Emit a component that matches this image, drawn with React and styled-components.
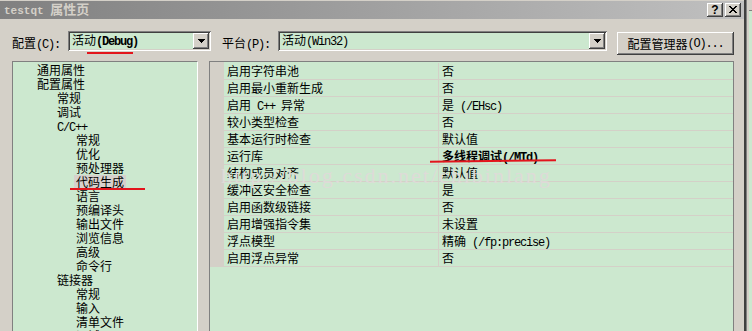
import React from "react";
import styled, { createGlobalStyle } from "styled-components";

const GREEN = "#cce8cf";
const FACE = "#d4d0c8";

const GlobalStyle = createGlobalStyle`
  html, body { margin: 0; padding: 0; width: 752px; height: 331px; overflow: hidden; background: ${FACE}; }
  body { font-family: "Noto Sans CJK SC", "Liberation Sans", sans-serif; font-size: 12px; color: #000; }
  #root { width: 752px; height: 331px; }
`;

const Latin = styled.span`
  font-family: "Liberation Mono", monospace;
  font-size: 12px;
  letter-spacing: -1.2px;
  font-weight: ${(p) => (p.$bold ? 700 : "inherit")};
`;

function Mixed({ text, boldLatin }) {
  const parts = text.split(/([\x20-\x7E]+)/).filter(Boolean);
  return parts.map((p, i) =>
    /^[\x20-\x7E]+$/.test(p) ? (
      <Latin key={i} $bold={boldLatin}>{p}</Latin>
    ) : (
      <React.Fragment key={i}>{p}</React.Fragment>
    )
  );
}

const Screen = styled.div`
  display: flex;
  width: 752px;
  height: 331px;
  overflow: hidden;
`;

const Dialog = styled.div`
  flex: none;
  width: 746px;
  height: 331px;
  display: flex;
  flex-direction: column;
  background: ${FACE};
  border-right: 2px solid #404040;
  padding-top: 1px;
  box-sizing: border-box;
`;

const BehindStrip = styled.div`
  flex: 1;
  background: ${FACE};
  display: flex;
  flex-direction: column;
  padding-top: 10px;
  border-left: 1px solid #808080;
`;

const BehindGreen = styled.div`
  flex: 1;
  margin-left: 2px;
  background: ${GREEN};
  border-top: 1px solid #808080;
`;

const TitleBar = styled.div`
  height: 18px;
  flex: none;
  display: flex;
  align-items: center;
  padding: 0 3px 0 4px;
  background: linear-gradient(to right, #808080, #c0c0c0);
`;

const TitleText = styled.span`
  color: ${FACE};
  font-weight: 700;
  font-size: 13px;
  line-height: 18px;
`;

const TitleMono = styled.span`
  font-family: "Liberation Mono", monospace;
  font-size: 11px;
  font-weight: 700;
`;

const CaptionButtons = styled.div`
  margin-left: auto;
  display: flex;
  gap: 2px;
`;

const raised = `
  box-shadow: inset -1px -1px #404040, inset 1px 1px #ffffff, inset -2px -2px #808080, inset 2px 2px ${FACE};
`;
const sunken = `
  box-shadow: inset 1px 1px #808080, inset -1px -1px #ffffff, inset 2px 2px #404040, inset -2px -2px ${FACE};
`;

const CaptionButton = styled.div`
  width: 16px;
  height: 14px;
  box-sizing: border-box;
  background: ${FACE};
  ${raised}
  display: flex;
  align-items: center;
  justify-content: center;
  font-family: "Liberation Sans", sans-serif;
  font-weight: 700;
  font-size: 12px;
  line-height: 14px;
  color: #000;
  padding-bottom: 1px;
`;

const Toolbar = styled.div`
  flex: none;
  height: 42px;
  box-sizing: border-box;
  display: flex;
  align-items: flex-start;
  padding: 12px 10px 0 12px;
`;

const FieldLabel = styled.div`
  flex: none;
  width: ${(p) => p.$w}px;
  margin-left: ${(p) => p.$ml || 0}px;
  height: 20px;
  line-height: 20px;
  padding-top: 2px;
  box-sizing: border-box;
  white-space: nowrap;
`;

const Combo = styled.div`
  position: relative;
  flex: none;
  width: ${(p) => p.$w}px;
  height: 20px;
  box-sizing: border-box;
  background: ${GREEN};
  ${sunken}
  display: flex;
  align-items: center;
  padding: 2px 2px 2px 4px;
`;

const ComboText = styled.div`
  flex: 1;
  line-height: 16px;
  white-space: nowrap;
`;

const ComboArrow = styled.div`
  flex: none;
  width: 16px;
  height: 16px;
  box-sizing: border-box;
  background: ${FACE};
  ${raised}
  display: flex;
  align-items: center;
  justify-content: center;
`;

const Mark = styled.span`
  position: absolute;
  left: ${(p) => p.$left}px;
  top: ${(p) => p.$top}px;
  width: ${(p) => p.$width}px;
  height: 2px;
  background: #e3141c;
  transform: rotate(${(p) => p.$rot || 0}deg);
  pointer-events: none;
`;

const PushButton = styled.div`
  flex: none;
  margin-left: 10px;
  margin-top: 1px;
  width: 117px;
  height: 23px;
  box-sizing: border-box;
  background: ${FACE};
  ${raised}
  display: flex;
  align-items: center;
  justify-content: center;
  line-height: 20px;
  padding-top: 1px;
  white-space: nowrap;
`;

const Content = styled.div`
  flex: 1;
  min-height: 0;
  display: flex;
  gap: 11px;
  padding: 0 10px 0 12px;
`;

const TreePanel = styled.div`
  flex: none;
  width: 186px;
  box-sizing: border-box;
  border-top: 1px solid #808080;
  border-left: 1px solid #808080;
  border-right: 1px solid #ffffff;
  background: ${GREEN};
  padding-top: 1px;
  overflow: hidden;
`;

const TreeItem = styled.div`
  height: 14px;
  line-height: 14px;
  padding-left: ${(p) => [24, 44, 63][p.$level]}px;
  white-space: nowrap;
`;

const TreeLabel = styled.span`
  position: relative;
  display: inline-block;
  height: 14px;
  padding: 0 2px;
  margin-left: -2px;
  background: ${(p) => (p.$selected ? "#d6d0cc" : "transparent")};
`;

const GridPanel = styled.div`
  position: relative;
  flex: 1;
  box-sizing: border-box;
  border-top: 1px solid #808080;
  border-left: 1px solid #808080;
  border-right: 1px solid #808080;
  background: ${GREEN};
  overflow: hidden;
`;

const Rows = styled.div`
  padding-top: 1px;
  background: linear-gradient(to right, ${FACE} 14px, transparent 14px);
`;

const Row = styled.div`
  display: grid;
  grid-template-columns: 14px 215px 1fr;
  height: 17px;
  box-sizing: border-box;
  border-bottom: 1px solid ${FACE};
`;

const NameCell = styled.div`
  grid-column: 2;
  padding-left: 3px;
  line-height: 16px;
  border-right: 1px solid ${FACE};
  white-space: nowrap;
`;

const ValueCell = styled.div`
  position: relative;
  padding-left: 3px;
  line-height: 16px;
  white-space: nowrap;
  font-weight: ${(p) => (p.$bold ? 700 : 400)};
`;

const Watermark = styled.div`
  position: absolute;
  left: 11px;
  top: 103px;
  font-family: "Liberation Serif", serif;
  font-size: 22px;
  line-height: 22px;
  letter-spacing: 2px;
  color: #dedbd8;
  white-space: nowrap;
  pointer-events: none;
`;

const tree = [
  [0, "通用属性"],
  [0, "配置属性"],
  [1, "常规"],
  [1, "调试"],
  [1, "C/C++"],
  [2, "常规"],
  [2, "优化"],
  [2, "预处理器"],
  [2, "代码生成", true],
  [2, "语言"],
  [2, "预编译头"],
  [2, "输出文件"],
  [2, "浏览信息"],
  [2, "高级"],
  [2, "命令行"],
  [1, "链接器"],
  [2, "常规"],
  [2, "输入"],
  [2, "清单文件"],
  [2, "调试"],
];

const props = [
  ["启用字符串池", "否"],
  ["启用最小重新生成", "否"],
  ["启用 C++ 异常", "是 (/EHsc)"],
  ["较小类型检查", "否"],
  ["基本运行时检查", "默认值"],
  ["运行库", "多线程调试(/MTd)", true],
  ["结构成员对齐", "默认值"],
  ["缓冲区安全检查", "是"],
  ["启用函数级链接", "否"],
  ["启用增强指令集", "未设置"],
  ["浮点模型", "精确 (/fp:precise)"],
  ["启用浮点异常", "否"],
];

const DownArrow = () => (
  <svg width="7" height="4" viewBox="0 0 7 4" shapeRendering="crispEdges">
    <polygon points="0,0 7,0 3.5,4" fill="#000" />
  </svg>
);

const CloseGlyph = () => (
  <svg width="8" height="7" viewBox="0 0 8 7" shapeRendering="crispEdges">
    <path d="M0 0h2v1h-2zM6 0h2v1h-2zM1 1h2v1h-2zM5 1h2v1h-2zM2 2h4v1h-4zM3 3h2v1h-2zM2 4h4v1h-4zM1 5h2v1h-2zM5 5h2v1h-2zM0 6h2v1h-2zM6 6h2v1h-2z" fill="#000" />
  </svg>
);

export default function App() {
  return (
    <>
      <GlobalStyle />
      <Screen>
        <Dialog>
          <TitleBar>
            <TitleText>
              <TitleMono>testqt </TitleMono>属性页
            </TitleText>
            <CaptionButtons>
              <CaptionButton>?</CaptionButton>
              <CaptionButton>
                <CloseGlyph />
              </CaptionButton>
            </CaptionButtons>
          </TitleBar>

          <Toolbar>
            <FieldLabel $w={56}>
              <Mixed text="配置(C):" />
            </FieldLabel>
            <Combo $w={143}>
              <ComboText>
                <Mixed text="活动(Debug)" boldLatin />
              </ComboText>
              <ComboArrow>
                <DownArrow />
              </ComboArrow>
              <Mark $left={19} $top={21} $width={46} />
            </Combo>
            <FieldLabel $w={56} $ml={11}>
              <Mixed text="平台(P):" />
            </FieldLabel>
            <Combo $w={329}>
              <ComboText>
                <Mixed text="活动(Win32)" />
              </ComboText>
              <ComboArrow>
                <DownArrow />
              </ComboArrow>
            </Combo>
            <PushButton>
              <Mixed text="配置管理器(O)..." />
            </PushButton>
          </Toolbar>

          <Content>
            <TreePanel>
              {tree.map(([level, label, selected], i) => (
                <TreeItem key={i} $level={level}>
                  <TreeLabel $selected={selected}>
                    <Mixed text={label} />
                    {selected && <Mark $left={-4} $top={13} $width={75} />}
                  </TreeLabel>
                </TreeItem>
              ))}
            </TreePanel>

            <GridPanel>
              <Rows>
                {props.map(([name, value, bold], i) => (
                  <Row key={i}>
                    <NameCell>
                      <Mixed text={name} />
                    </NameCell>
                    <ValueCell $bold={bold}>
                      <Mixed text={value} />
                      {bold && <Mark $left={-9} $top={12} $width={126} $rot={-0.6} />}
                    </ValueCell>
                  </Row>
                ))}
              </Rows>
              <Watermark>http://blog.csdn.net/chibinlang</Watermark>
            </GridPanel>
          </Content>
        </Dialog>
        <BehindStrip>
          <BehindGreen />
        </BehindStrip>
      </Screen>
    </>
  );
}
